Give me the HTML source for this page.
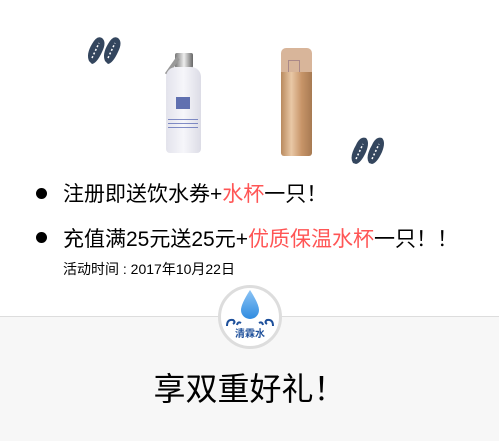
<!DOCTYPE html>
<html><head><meta charset="utf-8"><style>
body{margin:0;width:499px;height:440px;overflow:hidden;background:#fff;font-family:"Liberation Sans","Noto Sans CJK SC",sans-serif;position:relative}
.a{position:absolute}
.r{color:#f55}
.f{font-family:"Noto Sans CJK SC",sans-serif}
</style></head><body>
<svg class="a" style="left:86px;top:34px" width="38" height="34" viewBox="0 0 38 34">
<path d="M3 27 Q0 20 6 10 Q11 1 16 4 Q21 8 16 18 Q11 29 6 30Z M19 27 Q16 20 22 10 Q27 1 32 4 Q37 8 32 18 Q27 29 22 30Z" fill="#34465e"/>
<path d="M6 24 L13 9 M22 24 L29 9" stroke="#fff" stroke-width="1.5" stroke-dasharray="2 2"/>
</svg>
<svg class="a" style="left:348px;top:133px" width="40" height="34" viewBox="0 0 40 34">
<path d="M5 30 Q1 24 8 12 Q12 3 18 5 Q22 9 18 19 Q13 30 8 31Z M21 30 Q17 24 24 12 Q28 3 34 5 Q38 9 34 19 Q29 30 24 31Z" fill="#34465e"/>
<path d="M8 26 L15 11 M24 26 L31 11" stroke="#fff" stroke-width="1.5" stroke-dasharray="2 2"/>
</svg>
<!-- bottle -->
<div class="a" style="left:175px;top:53px;width:18px;height:15px;background:linear-gradient(90deg,#777,#eee,#666);border-radius:2px"></div>
<div class="a" style="left:158px;top:56px;width:20px;height:4px;background:#999;transform:rotate(-55deg);transform-origin:right"></div>
<div class="a" style="left:166px;top:67px;width:35px;height:86px;background:linear-gradient(90deg,#e3e3ec,#f6f6fa,#dcdce6);border-radius:10px 10px 4px 4px"></div>
<div class="a" style="left:176px;top:97px;width:14px;height:12px;background:#6070b0"></div>
<div class="a" style="left:168px;top:119px;width:30px;height:12px;background:repeating-linear-gradient(#5060b0 0 1px,transparent 1px 4px);opacity:.7"></div>
<!-- thermos -->
<div class="a" style="left:281px;top:48px;width:31px;height:24px;background:#d8b59a;border-radius:5px 5px 0 0"></div>
<div class="a" style="left:288px;top:60px;width:10px;height:12px;border:1px solid #a88;"></div>
<div class="a" style="left:281px;top:72px;width:31px;height:84px;background:linear-gradient(90deg,#b98a5e,#e9c8a6,#c79468,#a77a52);border-radius:0 0 3px 3px"></div>
<div class="a" style="left:36px;top:188px;width:11px;height:11px;border-radius:50%;background:#000"></div>
<div class="a" style="left:36px;top:232px;width:11px;height:11px;border-radius:50%;background:#000"></div>
<div class="a" style="left:63px;top:180px;font-size:21px;line-height:26px;white-space:nowrap">注册即送饮水券+<span class="r">水杯</span>一只<span class="f">！</span></div>
<div class="a" style="left:63px;top:225px;font-size:21px;line-height:26px;white-space:nowrap">充值满25元送25元+<span class="r">优质保温水杯</span>一只<span class="f">！！</span></div>
<div class="a" style="left:63px;top:260px;font-size:14px;line-height:18px;white-space:nowrap">活动时间 : 2017年10月22日</div>
<div class="a" style="left:0;top:316px;width:499px;height:124px;background:#f7f7f7;border-top:1px solid #ddd"></div>
<div class="a" style="left:218px;top:285px;width:58px;height:58px;border-radius:50%;background:#fff;border:3px solid #ddd"></div>
<svg class="a" style="left:224px;top:289px" width="52" height="52" viewBox="0 0 52 52">
<defs><linearGradient id="g" x1="0" y1="0" x2="0" y2="1"><stop offset="0" stop-color="#8cc4f5"/><stop offset="1" stop-color="#2f8be0"/></linearGradient></defs>
<path d="M26 1 Q35 15 35 21 A9 9 0 0 1 17 21 Q17 15 26 1Z" fill="url(#g)"/>
<path d="M3 37 Q3 30 9 31 Q12 33 9 35 M13 36 Q14 32 17 34 M35 34 Q38 32 39 36 M43 35 Q40 33 43 31 Q49 30 49 37" stroke="#1d4f9a" stroke-width="2" fill="none"/>
<text x="26" y="48" font-size="10" text-anchor="middle" fill="#1d4f9a" font-family="Noto Sans CJK SC" font-weight="bold">清霖水</text>
</svg>
<div class="a" style="left:0;width:499px;top:366px;text-align:center;font-size:32px;line-height:42px">享双重好礼<span class="f">！</span></div>
</body></html>
